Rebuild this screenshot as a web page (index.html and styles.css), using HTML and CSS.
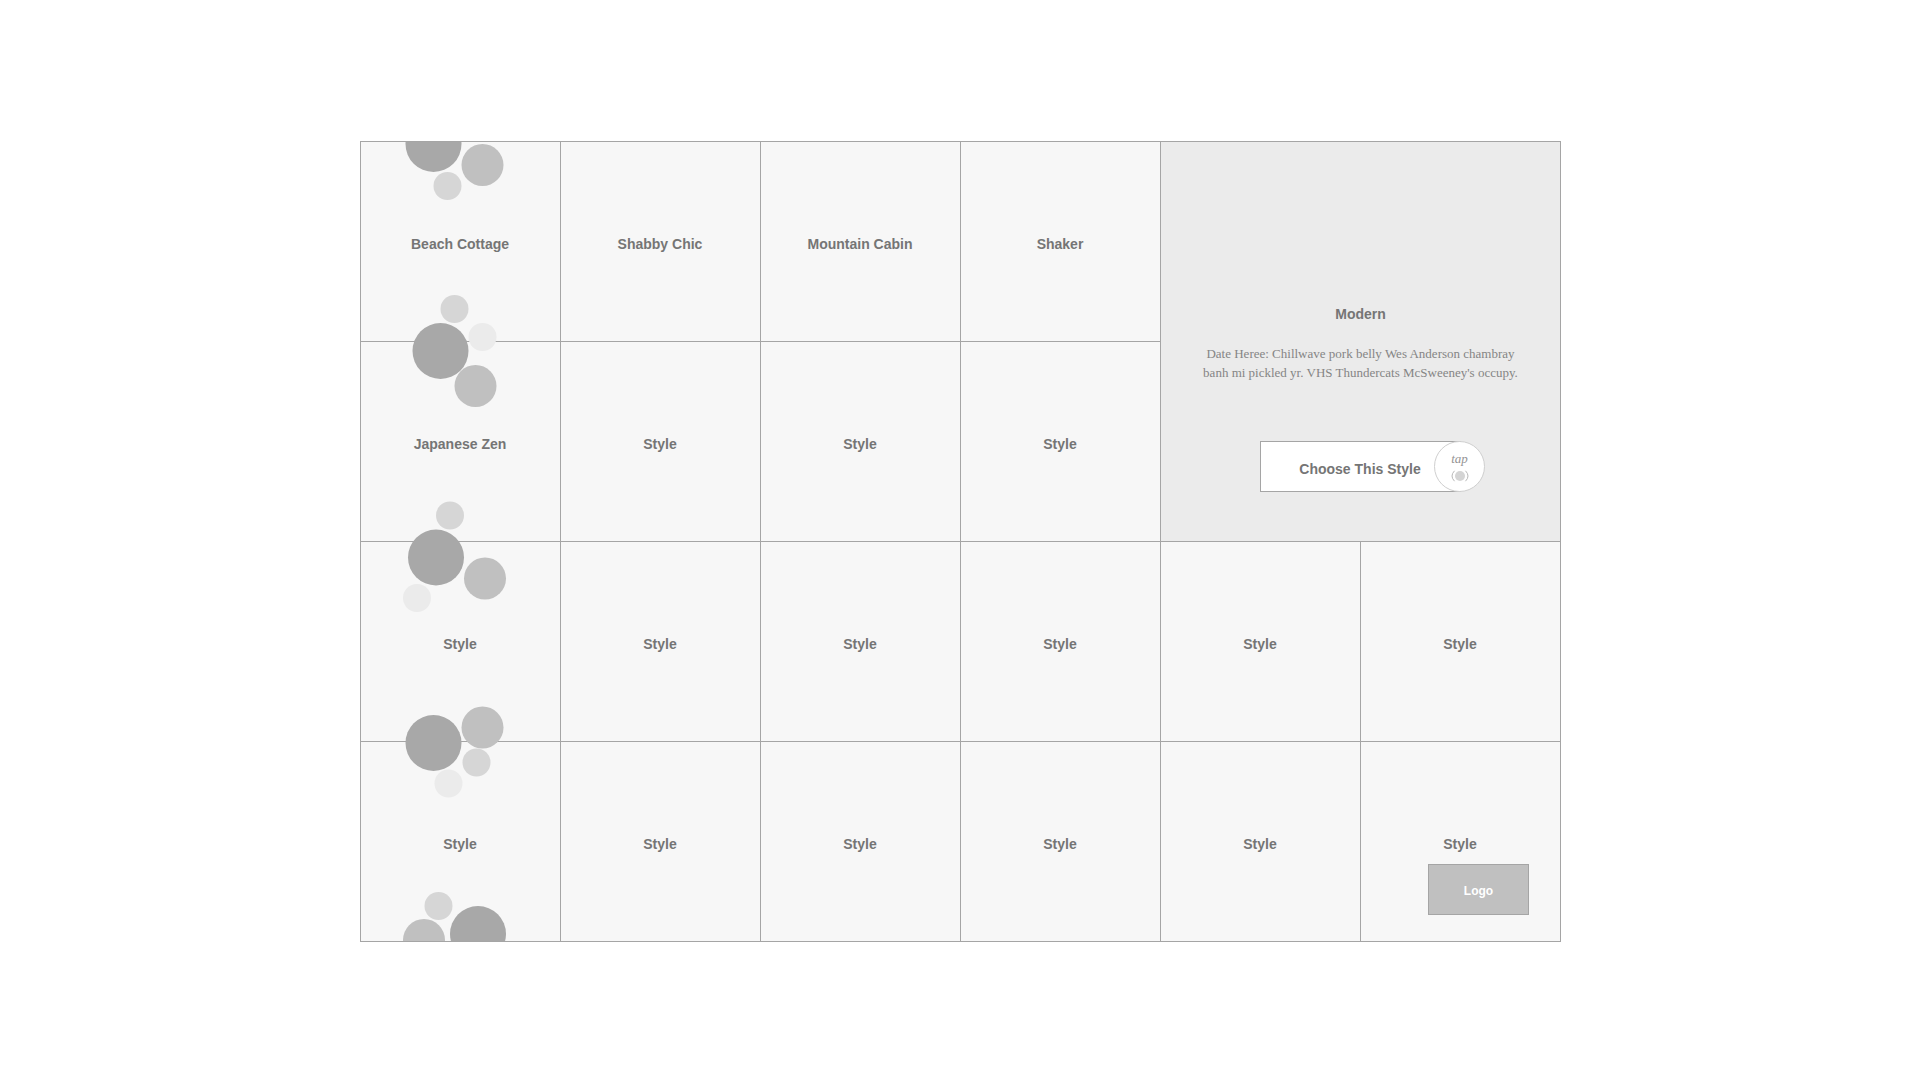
FILE: index.html
```html
<!DOCTYPE html>
<html lang="en">
<head>
<meta charset="utf-8">
<meta name="viewport" content="width=device-width, initial-scale=1">
<title>Choose a Style</title>
<link rel="stylesheet" href="styles.css">
</head>
<body>
<main class="board">
  <ul class="grid">
    <li class="cell"><button class="tile" type="button">Beach Cottage</button></li>
    <li class="cell"><button class="tile" type="button">Shabby Chic</button></li>
    <li class="cell"><button class="tile" type="button">Mountain Cabin</button></li>
    <li class="cell"><button class="tile" type="button">Shaker</button></li>
    <li class="feature">
      <h2 class="feature-title">Modern</h2>
      <p class="feature-text">Date Heree: Chillwave pork belly Wes Anderson chambray<br>banh mi pickled yr. VHS Thundercats McSweeney's occupy.</p>
      <button class="choose" type="button">Choose This Style
        <span class="tap">
          <span class="tap-label">tap</span>
          <svg class="tap-icon" viewBox="0 0 18 12" aria-hidden="true">
            <circle cx="9" cy="6" r="5" fill="#d4d4d4"/>
            <path d="M3.5 .8Q-1.5 6 3.5 11.2M14.5 .8Q19.5 6 14.5 11.2" fill="none" stroke="#b8b8b8"/>
          </svg>
        </span>
      </button>
    </li>
    <li class="cell"><button class="tile" type="button">Japanese Zen</button></li>
    <li class="cell"><button class="tile" type="button">Style</button></li>
    <li class="cell"><button class="tile" type="button">Style</button></li>
    <li class="cell"><button class="tile" type="button">Style</button></li>
    <li class="cell"><button class="tile" type="button">Style</button></li>
    <li class="cell"><button class="tile" type="button">Style</button></li>
    <li class="cell"><button class="tile" type="button">Style</button></li>
    <li class="cell"><button class="tile" type="button">Style</button></li>
    <li class="cell"><button class="tile" type="button">Style</button></li>
    <li class="cell"><button class="tile" type="button">Style</button></li>
    <li class="cell"><button class="tile" type="button">Style</button></li>
    <li class="cell"><button class="tile" type="button">Style</button></li>
    <li class="cell"><button class="tile" type="button">Style</button></li>
    <li class="cell"><button class="tile" type="button">Style</button></li>
    <li class="cell"><button class="tile" type="button">Style</button></li>
    <li class="cell"><button class="tile" type="button">Style</button></li>
  </ul>
  <svg class="bubbles" viewBox="0 0 200 801" aria-hidden="true">
    <g fill="#a8a8a8">
      <circle cx="73.5" cy="3" r="28"/>
      <circle cx="80.5" cy="210" r="28"/>
      <circle cx="76" cy="416.5" r="28"/>
      <circle cx="73.5" cy="602" r="28"/>
      <circle cx="118" cy="793" r="28"/>
    </g>
    <g fill="#c0c0c0">
      <circle cx="122.5" cy="24" r="21"/>
      <circle cx="115.5" cy="245" r="21"/>
      <circle cx="125" cy="437.5" r="21"/>
      <circle cx="122.5" cy="586.5" r="21"/>
      <circle cx="64" cy="799" r="21"/>
    </g>
    <g fill="#d6d6d6">
      <circle cx="87.5" cy="45" r="14"/>
      <circle cx="94.5" cy="168" r="14"/>
      <circle cx="90" cy="374.5" r="14"/>
      <circle cx="116.5" cy="621.5" r="14"/>
      <circle cx="78.5" cy="765" r="14"/>
    </g>
    <g fill="#ebebeb">
      <circle cx="122.5" cy="196" r="14"/>
      <circle cx="57" cy="457" r="14"/>
      <circle cx="88.5" cy="642.5" r="14"/>
    </g>
    <path d="M0 .5H200M0 800.5H200" stroke="#a5a5a5"/>
  </svg>
  <div class="logo">Logo</div>
</main>
</body>
</html>
```
FILE: styles.css
```css
* {
  box-sizing: border-box;
}

body {
  margin: 0;
  padding: 141px 0 138px 1px;
  background: #fff;
  color: #757575;
  font: bold 14px/20px "Liberation Sans", Arial, sans-serif;
}

button {
  font: inherit;
  color: inherit;
  cursor: pointer;
}

.board {
  position: relative;
  max-width: 1201px;
  margin: 0 auto;
}

.grid {
  display: grid;
  grid-template-columns: repeat(6, 1fr);
  gap: 1px;
  margin: 0;
  padding: 1px;
  list-style: none;
  background: #a5a5a5;
}

.cell {
  display: flex;
  aspect-ratio: 1;
  background: #f7f7f7;
}

.tile {
  flex: 1;
  border: 0;
  padding: 5px 1px 0 0;
  background: none;
}

.feature {
  grid-area: 1 / 5 / span 2 / span 2;
  display: flex;
  flex-direction: column;
  align-items: center;
  justify-content: center;
  padding-top: 113px;
  background: #ebebeb;
  text-align: center;
}

.feature-title {
  margin: 0;
  font-size: 14px;
}

.feature-text {
  margin: 20px 0 59px;
  color: #858585;
  font: 13px/19px "Liberation Serif", "Times New Roman", serif;
}

.choose {
  position: relative;
  width: 201px;
  height: 51px;
  padding: 5px 1px 0 0;
  border: 1px solid #a5a5a5;
  background: #fff;
}

.tap {
  position: absolute;
  top: -1px;
  right: -25px;
  display: flex;
  flex-direction: column;
  align-items: center;
  width: 51px;
  height: 51px;
  padding-top: 9px;
  border: 1px solid #cfcfcf;
  border-radius: 50%;
  background: #fff;
  color: #949494;
}

.tap-label {
  font: italic 13px/16px "Liberation Serif", "Times New Roman", serif;
}

.tap-icon {
  width: 18px;
  height: 12px;
  margin-top: 3px;
}

.bubbles {
  position: absolute;
  top: 0;
  left: 0;
  height: 100%;
  pointer-events: none;
}

.logo {
  position: absolute;
  right: 32px;
  bottom: 27px;
  display: flex;
  align-items: center;
  justify-content: center;
  width: 101px;
  height: 51px;
  padding-top: 2px;
  border: 1px solid #a5a5a5;
  background: #c0c0c0;
  color: #fff;
  font-size: 12px;
}
```
